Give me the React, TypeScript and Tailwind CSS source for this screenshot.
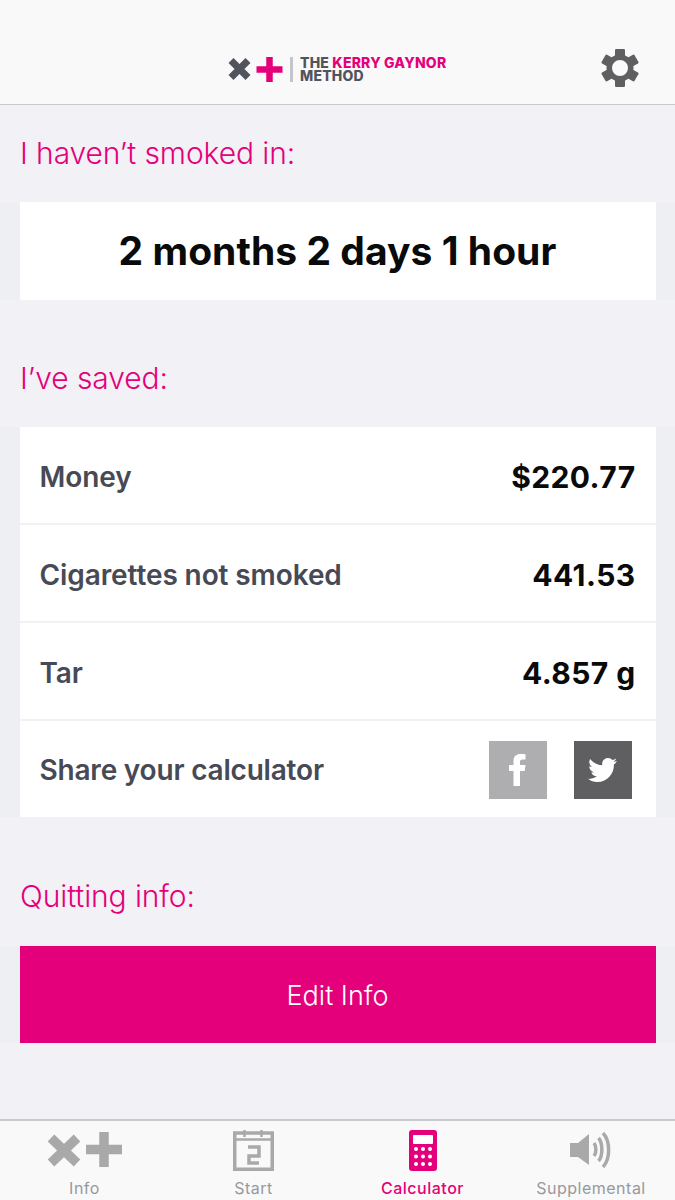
import React from "react";

const font = { fontFamily: "Inter, sans-serif" };

function Gear() {
  const teeth = [0, 60, 120, 180, 240, 300];
  return (
    <svg width="40" height="40" viewBox="0 0 40 40" fill="#5f5f62">
      {teeth.map((a) => (
        <rect key={a} x="15" y="1" width="10" height="10" rx="1.2" transform={`rotate(${a} 20 20)`} />
      ))}
      <path fillRule="evenodd" d="M20 6.500a13.500 13.500 0 1 0 0 27a13.500 13.500 0 1 0 0-27zM20 12a8 8 0 1 1 0 16a8 8 0 1 1 0-16z" />
    </svg>
  );
}

function XPlus() {
  return (
    <svg width="75" height="35" viewBox="0 0 75 35" fill="none" stroke="#a9a9aa">
      <path d="M4 6L30 31M30 6L4 31" strokeWidth="9.500" />
      <path d="M57 0V35M39 17.500H75" strokeWidth="9.500" />
    </svg>
  );
}

function LogoMark() {
  return (
    <svg width="55" height="25" viewBox="0 0 55 25" fill="none">
      <path d="M3 3.500L20 20.500M20 3.500L3 20.500" stroke="#51535d" strokeWidth="7" />
      <path d="M41.500 0V25M28.500 12.500H54.500" stroke="#e5007b" strokeWidth="6.500" />
    </svg>
  );
}

function Row({ label, value }: { label: string; value: string }) {
  return (
    <div className="h-[98px] flex items-center justify-between pl-[20px] pr-[20px] pt-[4px] border-b-2 border-[#f2f2f5]">
      <span className="text-[28px] font-semibold text-[#474a55] tracking-[-0.1px]">{label}</span>
      <span className="text-[30px] font-bold text-[#0a0a0a] tracking-[0.4px]">{value}</span>
    </div>
  );
}

function Band({ children }: { children: React.ReactNode }) {
  return (
    <div className="bg-[#eeeff2] px-[19.5px]">
      <div className="bg-white">{children}</div>
    </div>
  );
}

function Title({ children }: { children: React.ReactNode }) {
  return <div className="h-[97px] flex items-center pl-[20px] pb-[1px] text-[30px] font-light tracking-[-0.1px] text-[#e5007b]">{children}</div>;
}

function Tab({ icon, label, active, cls }: { icon: React.ReactNode; label: string; active?: boolean; cls: string }) {
  return (
    <div className={`flex flex-col items-center ${cls}`}>
      <div className="h-[50px] flex items-end">{icon}</div>
      <span className={`mt-[7px] text-[16px] leading-[20px] tracking-[0.5px] ${active ? "text-[#e5007b] font-medium" : "text-[#98989c]"}`}>{label}</span>
    </div>
  );
}

export default function App() {
  return (
    <div style={font} className="w-[675px] h-[1200px] bg-[#f1f1f6] flex flex-col overflow-hidden">
      <header className="h-[105px] shrink-0 bg-[#f9f9fa] border-b border-[#c8c8cd] relative">
        <div className="absolute left-[228px] top-[56px] flex items-center">
          <LogoMark />
          <div className="w-[3px] h-[25px] bg-[#c4c5c9] ml-[7px] mr-[7px]" />
          <div className="text-[14px] leading-[13px] font-extrabold tracking-[0.2px] text-[#51535d]">
            <div>THE <span className="text-[#e5007b]">KERRY GAYNOR</span></div>
            <div>METHOD</div>
          </div>
        </div>
        <div className="absolute left-[600px] top-[48px]"><Gear /></div>
      </header>

      <Title>I haven’t smoked in:</Title>
      <Band>
        <div className="h-[98px] flex items-center justify-center text-[39px] font-bold text-[#0a0a0a] tracking-[0.05px]">2 months 2 days 1 hour</div>
      </Band>

      <div className="h-[30px] shrink-0" />
      <Title>I’ve saved:</Title>
      <Band>
        <Row label="Money" value="$220.77" />
        <Row label="Cigarettes not smoked" value="441.53" />
        <Row label="Tar" value="4.857 g" />
        <div className="h-[96px] flex items-center justify-between pl-[20px] pr-[24px]">
          <span className="pt-[2px] text-[28px] font-semibold text-[#474a55] tracking-[-0.2px]">Share your calculator</span>
          <div className="flex gap-[27px] pt-[2px]">
            <div className="w-[58px] h-[58px] bg-[#aeaeb0] flex items-center justify-center">
              <svg width="18" height="34" viewBox="0 0 18 34" fill="#fff"><path d="M4.500 33V18H0V12H4.500V8C4.500 3 7.500 1 11.500 1C13.500 1 15 1.100 16.500 1.300V6.500H13.500C11.500 6.500 11 7.500 11 9V12H16.500L15.700 18H11V33Z" /></svg>
            </div>
            <div className="w-[58px] h-[58px] bg-[#5f5f61] flex items-center justify-center">
              <svg width="29" height="24" viewBox="0 0 24 20" fill="#fff"><path d="M24 2.400c-.9.400-1.800.7-2.800.800 1-.6 1.800-1.600 2.200-2.700-1 .6-2 1-3.100 1.200C19.300.7 18 0 16.600 0c-2.700 0-4.900 2.200-4.900 4.900 0 .4 0 .8.100 1.100C7.700 5.800 4.100 3.900 1.700.9 1.200 1.600 1 2.500 1 3.400c0 1.700.9 3.200 2.200 4.100-.8 0-1.600-.2-2.200-.6v.1c0 2.400 1.700 4.400 3.900 4.800-.4.100-.8.200-1.300.2-.3 0-.6 0-.9-.1.600 2 2.400 3.400 4.600 3.400-1.700 1.300-3.800 2.100-6.100 2.100-.4 0-.8 0-1.200-.1C2.200 19.300 4.800 20 7.500 20c9.100 0 14-7.500 14-14v-.6c1-.7 1.800-1.600 2.500-3z" /></svg>
            </div>
          </div>
        </div>
      </Band>

      <div className="h-[32px] shrink-0" />
      <div className="-mt-[1px] mb-[1px]"><Title>Quitting info:</Title></div>
      <Band>
        <div className="h-[97px] pt-[3px] bg-[#e5007b] flex items-center justify-center text-[27px] font-light text-white">Edit Info</div>
      </Band>

      <div className="flex-1" />
      <nav className="h-[81px] shrink-0 bg-[#f9f9fa] border-t-2 border-[#c8c8cd]">
        <div className="flex justify-between">
          <Tab cls="w-[169px]" label="Info" icon={<div className="pb-[4px]"><XPlus /></div>} />
          <Tab cls="w-[169px]" label="Start" icon={
            <svg width="41" height="41" viewBox="0 0 41 41" fill="none" stroke="#a9a9aa">
              <rect x="1.750" y="3" width="37.500" height="36.250" strokeWidth="3.500" />
              <path d="M1.500 9.500H39.500" strokeWidth="2.500" />
              <path d="M11.500 0V7M28.500 0V7" strokeWidth="2.500" />
              <path d="M15 17H26V26H16V33H26" strokeWidth="3.500" />
            </svg>
          } />
          <Tab cls="w-[169px]" label="Calculator" active icon={
            <svg width="28" height="41" viewBox="0 0 28 41">
              <rect width="28" height="41" rx="3" fill="#e5007b" />
              <rect x="4" y="5" width="20" height="9" rx="1" fill="#fff" />
              {[19, 26.500, 34].flatMap((y) => [7, 14, 21].map((x) => <circle key={`${x}-${y}`} cx={x} cy={y} r="2" fill="#fff" />))}
            </svg>
          } />
          <Tab cls="w-[168px]" label="Supplemental" icon={
            <div className="pb-[3px]">
              <svg width="42" height="36" viewBox="0 0 42 36" fill="none">
                <path d="M0 11H8L19 2V33L8 25H0Z" fill="#a9a9aa" />
                <path d="M24 11C26.500 14 26.500 21 24 24M28.500 6C33 11 33 24 28.500 29M33 1C40.500 9 40.500 27 33 35" stroke="#a9a9aa" strokeWidth="3.500" />
              </svg>
            </div>
          } />
        </div>
      </nav>
    </div>
  );
}
